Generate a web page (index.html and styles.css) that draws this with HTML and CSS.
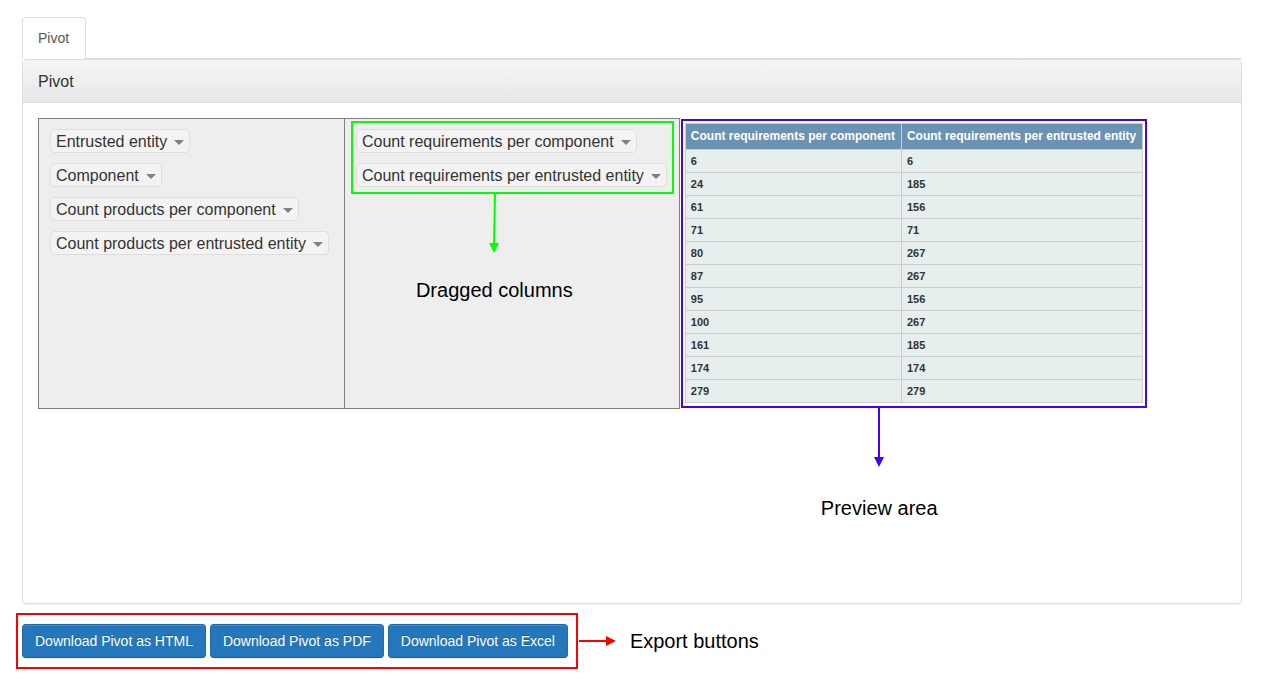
FILE: index.html
```html
<!DOCTYPE html>
<html lang="en">
<head>
<meta charset="utf-8">
<title>Pivot</title>
<link rel="stylesheet" href="styles.css">
</head>
<body>
<nav class="tabs"><a class="tab" href="#pivot">Pivot</a></nav>
<main class="panel" id="pivot">
  <h1 class="panel-heading">Pivot</h1>
  <div class="panel-body">
    <div class="pivot">
      <div class="axis axis-unused">
        <button class="chip" type="button">Entrusted entity<span class="caret"></span></button>
        <button class="chip" type="button">Component<span class="caret"></span></button>
        <button class="chip" type="button">Count products per component<span class="caret"></span></button>
        <button class="chip" type="button">Count products per entrusted entity<span class="caret"></span></button>
      </div>
      <div class="axis axis-rows">
        <div class="callout callout-green">
          <button class="chip" type="button">Count requirements per component<span class="caret"></span></button>
          <button class="chip" type="button">Count requirements per entrusted entity<span class="caret"></span></button>
          <div class="note note-green">
            <svg width="12" height="62" viewBox="0 0 12 62"><path d="M7 0L6 54" stroke="#0f0" stroke-width="2"/><path d="M1 51h10L6 61z" fill="#0f0"/></svg>
            <span>Dragged columns</span>
          </div>
        </div>
      </div>
      <div class="callout callout-blue">
        <table class="preview">
          <thead><tr><th scope="col">Count requirements per component</th><th scope="col">Count requirements per entrusted entity</th></tr></thead>
          <tbody>
            <tr><td>6</td><td>6</td></tr>
            <tr><td>24</td><td>185</td></tr>
            <tr><td>61</td><td>156</td></tr>
            <tr><td>71</td><td>71</td></tr>
            <tr><td>80</td><td>267</td></tr>
            <tr><td>87</td><td>267</td></tr>
            <tr><td>95</td><td>156</td></tr>
            <tr><td>100</td><td>267</td></tr>
            <tr><td>161</td><td>185</td></tr>
            <tr><td>174</td><td>174</td></tr>
            <tr><td>279</td><td>279</td></tr>
          </tbody>
        </table>
        <div class="note note-blue">
          <svg width="12" height="62" viewBox="0 0 12 62"><path d="M6 0V54" stroke="#40f" stroke-width="2"/><path d="M1 51h10L6 61z" fill="#40f"/></svg>
          <span>Preview area</span>
        </div>
      </div>
    </div>
  </div>
</main>
<footer class="export">
  <div class="callout callout-red">
    <button class="btn" type="button">Download Pivot as HTML</button>
    <button class="btn" type="button">Download Pivot as PDF</button>
    <button class="btn" type="button">Download Pivot as Excel</button>
  </div>
  <svg width="38" height="12" viewBox="0 0 38 12"><path d="M1 6H30" stroke="#f00" stroke-width="2"/><path d="M28 1v10L38 6z" fill="#f00"/></svg>
  <span class="export-label">Export buttons</span>
</footer>
</body>
</html>
```
FILE: styles.css
```css
* { box-sizing: border-box; }
body {
  margin: 0;
  padding: 17px 25px 0 22px;
  background: #fff;
  color: #333;
  font-family: "Liberation Sans", Arial, sans-serif;
  font-size: 14px;
  line-height: 20px;
}
button { font-family: inherit; cursor: pointer; }
svg { display: block; flex: none; }
.tabs { display: flex; border-bottom: 1px solid #ddd; }
.tab {
  margin-bottom: -1px;
  padding: 10px 16px 10px 15px;
  border: 1px solid #ddd;
  border-bottom-color: #fff;
  border-radius: 4px 4px 0 0;
  background: #fff;
  color: #555;
  text-decoration: none;
}
.panel {
  border: 1px solid #ddd;
  border-radius: 4px;
  box-shadow: 0 1px 1px rgba(0, 0, 0, .05);
}
.panel-heading {
  margin: 0;
  padding: 13px 15px 11px;
  border-bottom: 1px solid #ddd;
  border-radius: 3px 3px 0 0;
  background: linear-gradient(#f5f5f5, #e8e8e8);
  font-size: 16px;
  line-height: 18px;
  font-weight: normal;
}
.panel-body { min-height: 500px; padding: 15px; }
.pivot { display: flex; }
.axis {
  display: flex;
  flex-direction: column;
  align-items: flex-start;
  gap: 10px;
  border: 1px solid #808080;
  background: #eee;
}
.axis-unused { padding: 10px 15px 10px 11px; }
.axis-rows { margin-left: -1px; padding: 2px 5px 2px 6px; }
.chip {
  display: flex;
  align-items: center;
  gap: 7px;
  padding: 2px 5px 0;
  border: 1px solid #dedede;
  border-radius: 5px;
  background: #f3f3f3;
  color: #333;
  font-size: 16px;
  line-height: 20px;
  white-space: nowrap;
}
.caret {
  margin-top: 1px;
  border: 5px solid transparent;
  border-top-color: #808080;
  border-bottom: 0;
}
.callout { position: relative; border: 2px solid; }
.callout-green {
  display: flex;
  flex-direction: column;
  align-items: flex-start;
  gap: 10px;
  padding: 6px 5px 5px 3px;
  border-color: #0f0;
}
.callout-blue { margin: 1px; padding: 2px 2px 3px; border-color: #40f; }
.callout-red {
  display: flex;
  gap: 4px;
  margin-left: -6px;
  padding: 9px 8px 9px 4px;
  border-color: #f00;
}
.note {
  position: absolute;
  top: 100%;
  display: flex;
  flex-direction: column;
  align-items: center;
  color: #000;
  font-size: 20px;
  line-height: 24px;
  white-space: nowrap;
}
.note-green { left: 63px; gap: 24px; }
.note-blue { left: 138px; gap: 28px; }
.preview { border-collapse: collapse; text-align: left; }
.preview th, .preview td { padding: 5px 6px 5px 5px; border: 1px solid #cdcdcd; font-weight: bold; }
.preview th { background: #6b92b3; color: #fff; font-size: 12px; line-height: 15px; white-space: nowrap; }
.preview td { background: #e6eeee; font-size: 11px; line-height: 12px; }
.export { display: flex; align-items: center; margin-top: 9px; }
.export-label { margin-left: 14px; color: #000; font-size: 20px; line-height: 24px; }
.btn {
  padding: 6px 12px;
  border: 1px solid #2b669a;
  border-color: #2369a6 #2369a6 #1f5f98;
  border-radius: 4px;
  background: #2577bc;
  box-shadow: inset 0 1px 0 rgba(255, 255, 255, .15), 0 1px 1px rgba(0, 0, 0, .08);
  color: #fff;
  font-size: 14px;
  line-height: 20px;
  text-shadow: 0 -1px 0 rgba(0, 0, 0, .2);
  white-space: nowrap;
}
```
